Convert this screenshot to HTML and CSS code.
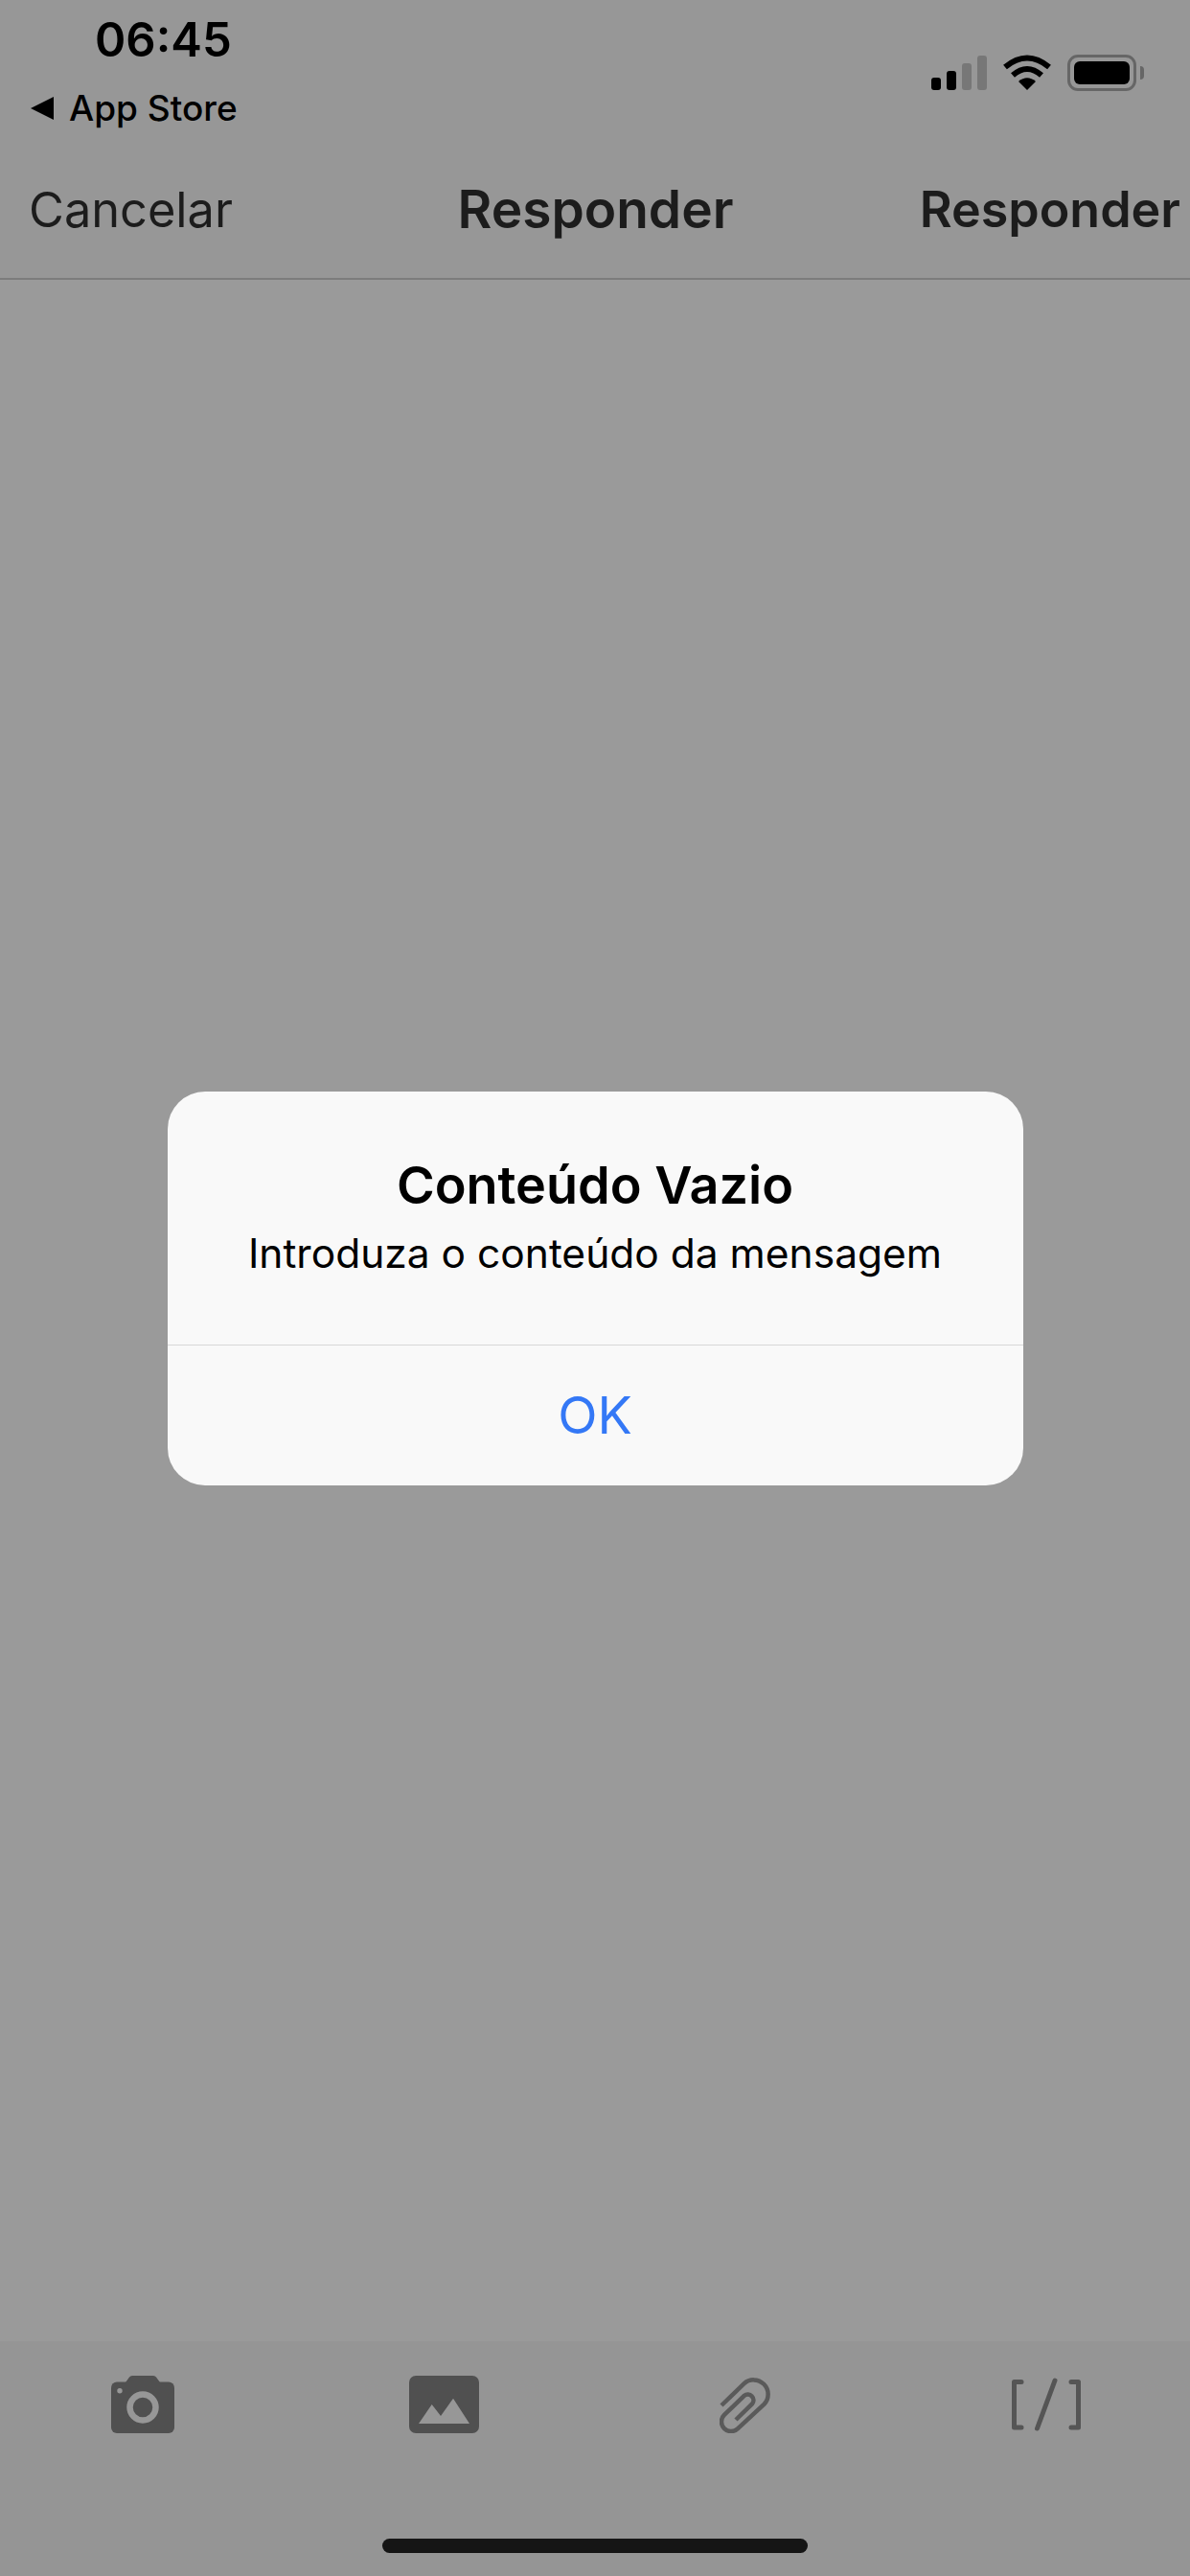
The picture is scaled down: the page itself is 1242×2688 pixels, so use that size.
FILE: index.html
```html
<!DOCTYPE html>
<html lang="pt">
<head>
    <meta charset="UTF-8">
    <meta name="viewport" content="width=device-width, initial-scale=1.0">
    <title>Responder</title>
    <link rel="stylesheet" href="styles.css">
</head>
<body>
    <div class="screen">
        <header class="status-bar">
            <div class="status-left">
                <span class="time">06:45</span>
                <span class="back-app"><span class="back-arrow"></span>App Store</span>
            </div>
            <div class="status-icons">
                <div class="signal">
                    <span class="bar bar-1"></span>
                    <span class="bar bar-2"></span>
                    <span class="bar bar-3 off"></span>
                    <span class="bar bar-4 off"></span>
                </div>
                <svg class="wifi" width="50" height="37" viewBox="0 0 50 37">
                    <path d="M2 13 Q25 -6 48 13" fill="none" stroke="#000" stroke-width="6"/>
                    <path d="M10 21.500 Q25 8.500 40 21.500" fill="none" stroke="#000" stroke-width="6"/>
                    <path d="M16 28 Q25 20.500 34 28 L25 37 Z" fill="#000"/>
                </svg>
                <div class="battery">
                    <div class="battery-body"><span class="battery-level"></span></div>
                    <span class="battery-cap"></span>
                </div>
            </div>
        </header>

        <nav class="nav-bar">
            <span class="nav-cancel">Cancelar</span>
            <span class="nav-title">Responder</span>
            <span class="nav-action">Responder</span>
        </nav>

        <main class="content"></main>

        <footer class="toolbar">
            <div class="tools">
                <svg class="tool-camera" width="66" height="60" viewBox="0 0 66 60">
                    <path d="M15 7 L19 1.500 Q20 0 22 0 H44 Q46 0 47 1.500 L51 7 Z" fill="#505050"/>
                    <rect y="6.500" width="66" height="53.500" rx="6" fill="#505050"/>
                    <circle cx="33" cy="33" r="13.500" fill="#505050" stroke="#979797" stroke-width="6.500"/>
                    <circle cx="9" cy="15.700" r="2.700" fill="#979797"/>
                </svg>
                <svg class="tool-image" width="73" height="60" viewBox="0 0 73 60">
                    <rect width="73" height="60" rx="7" fill="#505050"/>
                    <path d="M10 50 L23.700 30 L33 42 L46 23.700 L63 50 Z" fill="#979797"/>
                </svg>
                <svg class="tool-clip" width="53" height="60" viewBox="0 0 53 60">
                    <path d="M2 31 L25.400 8.400 A15 15 0 0 1 46.600 29.600 L19.100 55.100 A10 10 0 0 1 4.900 40.900 L25.800 20.800 A6 6 0 0 1 34.200 29.200 L17 46" fill="none" stroke="#5a5a5a" stroke-width="4.500"/>
                </svg>
                <svg class="tool-code" width="74" height="60" viewBox="0 0 74 60">
                    <g fill="none" stroke="#555" stroke-width="5" stroke-linecap="round" stroke-linejoin="round">
                        <path d="M11 6.500 H3.500 V54 H11"/>
                        <path d="M63 6.500 H70.500 V54 H63"/>
                        <path d="M27.500 55 L46 5"/>
                    </g>
                </svg>
            </div>
            <div class="home-bar"></div>
        </footer>

        <div class="overlay">
            <div class="alert">
                <div class="alert-text">
                    <h2 class="alert-title">Conteúdo Vazio</h2>
                    <p class="alert-message">Introduza o conteúdo da mensagem</p>
                </div>
                <button class="alert-ok">OK</button>
            </div>
        </div>
    </div>
</body>
</html>
```

FILE: styles.css
```css
html, body {
    margin: 0;
    padding: 0;
}
body {
    font-family: Inter, "Liberation Sans", sans-serif;
    background-color: #9a9a9a;
}
.screen {
    position: relative;
    width: 1242px;
    height: 2688px;
    display: flex;
    flex-direction: column;
    overflow: hidden;
}

/* status bar */
.status-bar {
    background: #979797;
    height: 150px;
    display: flex;
    justify-content: space-between;
    color: #000;
}
.status-left {
    display: flex;
    flex-direction: column;
    padding: 13px 0 0 32px;
}
.time {
    font-size: 49px;
    line-height: 58px;
    font-weight: 600;
    padding-left: 67px;
}
.back-app {
    margin-top: 20px;
    display: flex;
    align-items: center;
    gap: 16px;
    font-size: 37px;
    line-height: 44px;
    font-weight: 500;
}
.back-arrow {
    width: 0;
    height: 0;
    border-top: 12px solid transparent;
    border-bottom: 12px solid transparent;
    border-right: 24px solid #000;
}
.status-icons {
    display: flex;
    align-items: flex-start;
    padding: 58px 48px 0 0;
}
.signal {
    display: flex;
    align-items: flex-end;
    gap: 6px;
    height: 36px;
    margin-right: 17px;
}
.bar {
    width: 10px;
    border-radius: 3px;
    background: #000;
}
.bar.off {
    background: #777;
}
.bar-1 { height: 13px; }
.bar-2 { height: 20px; }
.bar-3 { height: 28px; }
.bar-4 { height: 36px; }
.wifi {
    margin: -1px 17px 0 0;
}
.battery {
    display: flex;
    align-items: center;
    gap: 4px;
    height: 38px;
    margin-top: -1px;
}
.battery-body {
    box-sizing: border-box;
    width: 72px;
    height: 38px;
    padding: 4px;
    border: 3px solid #666;
    border-radius: 11px;
}
.battery-level {
    display: block;
    height: 100%;
    background: #000;
    border-radius: 6px;
}
.battery-cap {
    width: 4px;
    height: 14px;
    background: #666;
    border-radius: 0 4px 4px 0;
}

/* nav */
.nav-bar {
    background: #979797;
    height: 142px;
    box-sizing: border-box;
    display: grid;
    grid-template-columns: 1fr auto 1fr;
    align-items: center;
    padding: 0 10px 4px 11px;
    border-bottom: 2px solid #7c7c7c;
    color: #1c1c1c;
    font-size: 50.5px;
}
.nav-cancel {
    margin-left: 19px;
}
.nav-title {
    font-size: 55px;
    font-weight: 600;
}
.nav-action {
    justify-self: end;
    font-size: 52px;
    font-weight: 600;
}

.content {
    flex: 1;
    background: #9a9a9a;
}

/* bottom tools */
.toolbar {
    background: #959595;
    height: 245px;
    display: flex;
    flex-direction: column;
    align-items: center;
}
.tools {
    align-self: stretch;
    margin-top: 36px;
    padding-left: 116px;
    display: flex;
    gap: 251px;
}
.tool-image {
    margin-left: -6px;
}
.home-bar {
    width: 444px;
    height: 15px;
    margin-top: 110px;
    background: #151515;
    border-radius: 8px;
}

/* alert */
.overlay {
    position: absolute;
    inset: 0;
    display: flex;
    align-items: center;
    justify-content: center;
}
.alert {
    width: 893px;
    height: 411px;
    background: #f9f9f9;
    border-radius: 39px;
    display: flex;
    flex-direction: column;
    text-align: center;
    color: #000;
}
.alert-text {
    height: 265px;
    padding-top: 65px;
    box-sizing: border-box;
    border-bottom: 1px solid #d8d8d8;
}
.alert-title {
    margin: 0;
    font-size: 54px;
    line-height: 66px;
    font-weight: 600;
}
.alert-message {
    margin: 13px 0 0;
    font-size: 42.5px;
    line-height: 50px;
}
.alert-ok {
    flex: 1;
    border: none;
    background: none;
    padding: 0;
    font-family: inherit;
    font-size: 54px;
    color: #3478f6;
}
```
